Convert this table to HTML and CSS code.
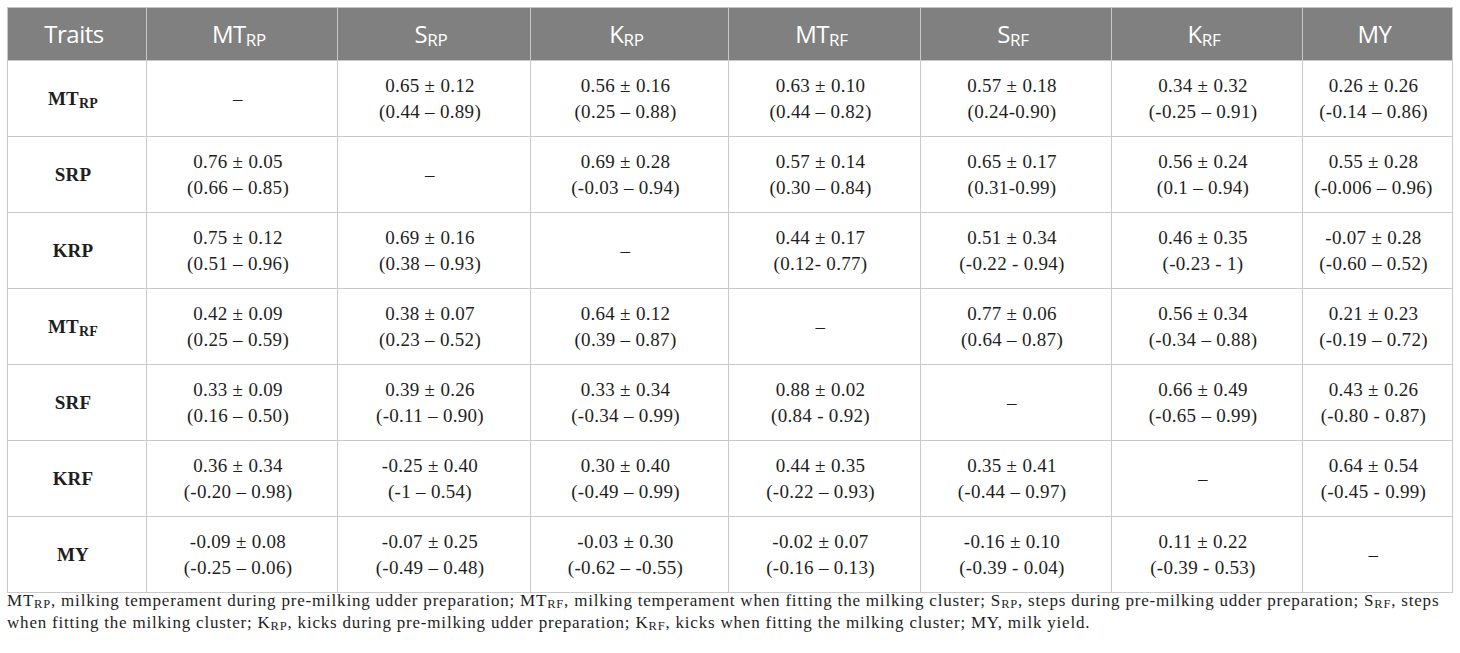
FILE: index.html
```html
<!DOCTYPE html>
<html lang="en">
<head>
<meta charset="utf-8">
<title>Correlations table</title>
<link rel="stylesheet" href="styles.css">
</head>
<body>
<div class="page">
<table class="corr">
  <colgroup>
    <col class="c-label"><col class="c1"><col class="c2"><col class="c3"><col class="c4"><col class="c5"><col class="c6"><col class="c7">
  </colgroup>
  <thead>
    <tr>
      <th>Traits</th>
      <th>MT<span class="hsub">RP</span></th>
      <th>S<span class="hsub">RP</span></th>
      <th>K<span class="hsub">RP</span></th>
      <th>MT<span class="hsub">RF</span></th>
      <th>S<span class="hsub">RF</span></th>
      <th>K<span class="hsub">RF</span></th>
      <th>MY</th>
    </tr>
  </thead>
  <tbody>
    <tr>
      <td class="lbl">MT<span class="bsub">RP</span></td>
      <td class="dash">–</td>
      <td>0.65 ± 0.12<br>(0.44 – 0.89)</td>
      <td>0.56 ± 0.16<br>(0.25 – 0.88)</td>
      <td>0.63 ± 0.10<br>(0.44 – 0.82)</td>
      <td>0.57 ± 0.18<br>(0.24-0.90)</td>
      <td>0.34 ± 0.32<br>(-0.25 – 0.91)</td>
      <td>0.26 ± 0.26<br>(-0.14 – 0.86)</td>
    </tr>
    <tr>
      <td class="lbl">SRP</td>
      <td>0.76 ± 0.05<br>(0.66 – 0.85)</td>
      <td class="dash">–</td>
      <td>0.69 ± 0.28<br>(-0.03 – 0.94)</td>
      <td>0.57 ± 0.14<br>(0.30 – 0.84)</td>
      <td>0.65 ± 0.17<br>(0.31-0.99)</td>
      <td>0.56 ± 0.24<br>(0.1 – 0.94)</td>
      <td>0.55 ± 0.28<br>(-0.006 – 0.96)</td>
    </tr>
    <tr>
      <td class="lbl">KRP</td>
      <td>0.75 ± 0.12<br>(0.51 – 0.96)</td>
      <td>0.69 ± 0.16<br>(0.38 – 0.93)</td>
      <td class="dash">–</td>
      <td>0.44 ± 0.17<br>(0.12- 0.77)</td>
      <td>0.51 ± 0.34<br>(-0.22 - 0.94)</td>
      <td>0.46 ± 0.35<br>(-0.23 - 1)</td>
      <td>-0.07 ± 0.28<br>(-0.60 – 0.52)</td>
    </tr>
    <tr>
      <td class="lbl">MT<span class="bsub">RF</span></td>
      <td>0.42 ± 0.09<br>(0.25 – 0.59)</td>
      <td>0.38 ± 0.07<br>(0.23 – 0.52)</td>
      <td>0.64 ± 0.12<br>(0.39 – 0.87)</td>
      <td class="dash">–</td>
      <td>0.77 ± 0.06<br>(0.64 – 0.87)</td>
      <td>0.56 ± 0.34<br>(-0.34 – 0.88)</td>
      <td>0.21 ± 0.23<br>(-0.19 – 0.72)</td>
    </tr>
    <tr>
      <td class="lbl">SRF</td>
      <td>0.33 ± 0.09<br>(0.16 – 0.50)</td>
      <td>0.39 ± 0.26<br>(-0.11 – 0.90)</td>
      <td>0.33 ± 0.34<br>(-0.34 – 0.99)</td>
      <td>0.88 ± 0.02<br>(0.84 - 0.92)</td>
      <td class="dash">–</td>
      <td>0.66 ± 0.49<br>(-0.65 – 0.99)</td>
      <td>0.43 ± 0.26<br>(-0.80 - 0.87)</td>
    </tr>
    <tr>
      <td class="lbl">KRF</td>
      <td>0.36 ± 0.34<br>(-0.20 – 0.98)</td>
      <td>-0.25 ± 0.40<br>(-1 – 0.54)</td>
      <td>0.30 ± 0.40<br>(-0.49 – 0.99)</td>
      <td>0.44 ± 0.35<br>(-0.22 – 0.93)</td>
      <td>0.35 ± 0.41<br>(-0.44 – 0.97)</td>
      <td class="dash">–</td>
      <td>0.64 ± 0.54<br>(-0.45 - 0.99)</td>
    </tr>
    <tr>
      <td class="lbl">MY</td>
      <td>-0.09 ± 0.08<br>(-0.25 – 0.06)</td>
      <td>-0.07 ± 0.25<br>(-0.49 – 0.48)</td>
      <td>-0.03 ± 0.30<br>(-0.62 – -0.55)</td>
      <td>-0.02 ± 0.07<br>(-0.16 – 0.13)</td>
      <td>-0.16 ± 0.10<br>(-0.39 - 0.04)</td>
      <td>0.11 ± 0.22<br>(-0.39 - 0.53)</td>
      <td class="dash">–</td>
    </tr>
  </tbody>
</table>
<p class="note">MT<span class="nsub">RP</span>, milking temperament during pre-milking udder preparation; MT<span class="nsub">RF</span>, milking temperament when fitting the milking cluster; S<span class="nsub">RP</span>, steps during pre-milking udder preparation; S<span class="nsub">RF</span>, steps when fitting the milking cluster; K<span class="nsub">RP</span>, kicks during pre-milking udder preparation; K<span class="nsub">RF</span>, kicks when fitting the milking cluster; MY, milk yield.</p>
</div>
</body>
</html>
```

FILE: styles.css
```css
html, body {
  margin: 0;
  padding: 0;
  background: #ffffff;
}

.page {
  padding: 7px 7px 0 7px;
  width: 1446px;
}

.corr {
  border-collapse: collapse;
  table-layout: fixed;
  width: 1446px;
  font-family: "Liberation Serif", "Times New Roman", serif;
  color: #1e1e1e;
}

.c-label { width: 139px; }
.c1 { width: 191px; }
.c2 { width: 193px; }
.c3 { width: 198px; }
.c4 { width: 192px; }
.c5 { width: 191px; }
.c6 { width: 191px; }
.c7 { width: 150px; }

.corr th {
  background: #808080;
  color: #ffffff;
  font-family: "Open Sans", "Liberation Sans", sans-serif;
  font-weight: 400;
  font-size: 24px;
  letter-spacing: -0.5px;
  height: 52px;
  padding: 0 6px 0 0;
  border: 1px solid #c9c9c9;
  text-align: center;
  vertical-align: middle;
  line-height: 26px;
}

.hsub {
  font-size: 17px;
  letter-spacing: -0.3px;
  vertical-align: -3px;
  line-height: 0;
}

.corr td {
  border: 1px solid #c9c9c9;
  height: 75px;
  padding: 0 8px 0 0;
  text-align: center;
  vertical-align: middle;
  font-size: 19px;
  letter-spacing: 0.3px;
  line-height: 26px;
}

.corr td.lbl {
  font-weight: 700;
  font-size: 19px;
  letter-spacing: 0.2px;
}

.bsub {
  font-size: 14px;
  vertical-align: -3px;
  line-height: 0;
}

.note {
  margin: -3px 0 0 0;
  font-family: "Liberation Serif", "Times New Roman", serif;
  font-size: 17px;
  letter-spacing: 0.8px;
  line-height: 22px;
  color: #1e1e1e;
}

.nsub {
  font-size: 12.5px;
  vertical-align: -2px;
  line-height: 0;
}
```
